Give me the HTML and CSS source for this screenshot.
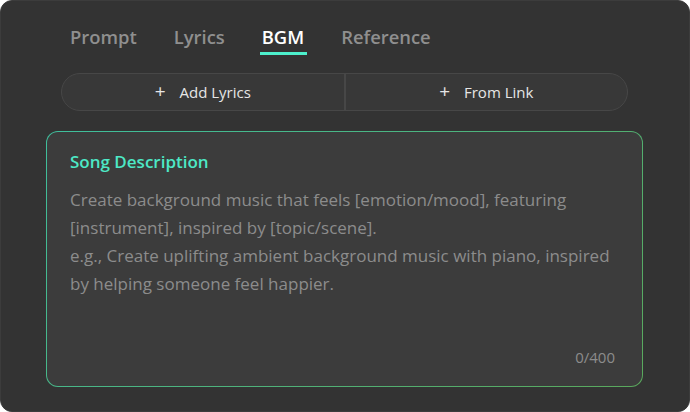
FILE: index.html
```html
<!DOCTYPE html>
<html>
<head>
<meta charset="utf-8">
<link rel="stylesheet" href="styles.css">
</head>
<body>
<div class="panel">
  <nav class="tabs">
    <span class="tab">Prompt</span>
    <span class="tab">Lyrics</span>
    <span class="tab active">BGM</span>
    <span class="tab">Reference</span>
  </nav>
  <div class="actions">
    <button class="action"><span class="plus">+</span>Add Lyrics</button>
    <button class="action"><span class="plus">+</span>From Link</button>
  </div>
  <div class="card">
    <div class="card-title">Song Description</div>
    <p class="placeholder">Create background music that feels [emotion/mood], featuring [instrument], inspired by [topic/scene].<br>e.g., Create uplifting ambient background music with piano, inspired by helping someone feel happier.</p>
    <div class="counter">0/400</div>
  </div>
</div>
</body>
</html>
```

FILE: styles.css
```css
* { box-sizing: border-box; }
html, body { margin: 0; padding: 0; background: #ffffff; }
body { font-family: "Open Sans", "Noto Sans", sans-serif; }

.panel {
  width: 690px;
  height: 412px;
  background: #333333;
  border: 1px solid #3c3c3c;
  border-radius: 12px;
  padding: 0 46px 0 45px;
  display: flex;
  flex-direction: column;
}

.tabs {
  display: flex;
  gap: 37px;
  padding: 22px 0 0 24px;
  height: 56px;
}
.tab {
  position: relative;
  font-size: 18.4px;
  font-weight: 600;
  color: #8f8f8f;
  line-height: 28px;
  height: 32px;
}
.tab.active { color: #ffffff; }
.tab.active::after {
  content: "";
  position: absolute;
  left: -2px;
  right: -3px;
  bottom: 0;
  height: 3px;
  background: #4df0cc;
}

.actions {
  margin: 16px 15px 0 15px;
  height: 38px;
  display: flex;
  border: 1px solid #474747;
  border-radius: 19px;
  background: #383838;
  overflow: hidden;
}
.action {
  flex: 1;
  border: 0;
  background: transparent;
  color: #e6e6e6;
  font-family: inherit;
  font-size: 15px;
  display: flex;
  align-items: center;
  justify-content: center;
  padding: 0;
}
.action + .action { border-left: 2px solid #474747; }
.plus {
  font-size: 19px;
  font-weight: 400;
  margin-right: 14px;
  line-height: 1;
  position: relative;
  top: -1px;
}

.card {
  margin-top: 20px;
  height: 256px;
  border-radius: 12px;
  border: 1px solid transparent;
  background:
    linear-gradient(#3c3c3c, #3c3c3c) padding-box,
    linear-gradient(135deg, #3fbf9d 0%, #4fb27a 55%, #5aa85c 100%) border-box;
  padding: 18px 24px 20px 23px;
  display: flex;
  flex-direction: column;
}
.card-title {
  color: #4de8c6;
  font-size: 17px;
  font-weight: 600;
  line-height: 24px;
}
.placeholder {
  margin: 12px 0 0 0;
  color: #8c8c8c;
  font-size: 17px;
  line-height: 28px;
  flex: 1;
}
.counter {
  align-self: flex-end;
  color: #8c8c8c;
  font-size: 15px;
  line-height: 18px;
  margin-right: 3px;
}
```
